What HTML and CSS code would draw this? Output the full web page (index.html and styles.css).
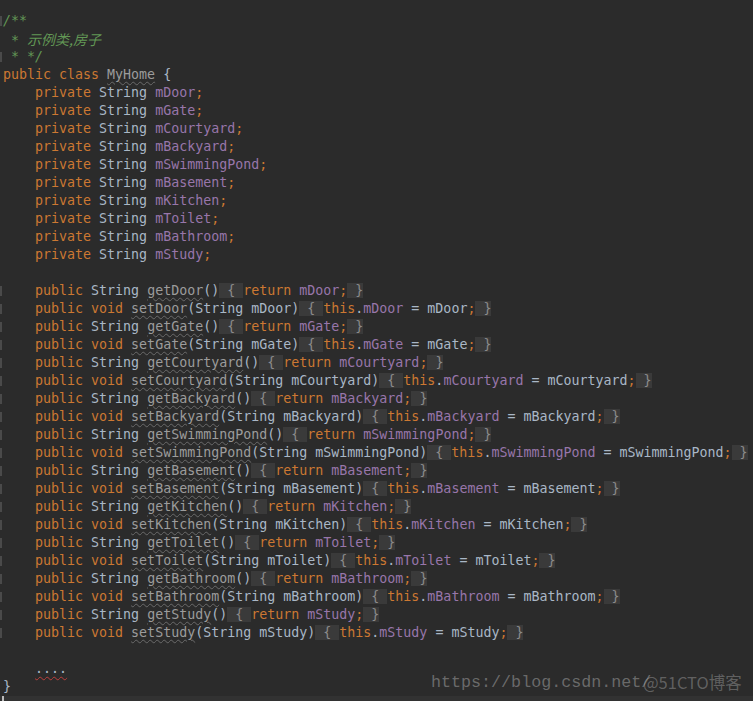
FILE: index.html
```html
<!DOCTYPE html>
<html lang="zh">
<head>
  <meta charset="UTF-8">
  <title>MyHome.java</title>
  <link rel="stylesheet" href="styles.css">
</head>
<body>
  <section class="editor">
    <div class="line mark"><span class="c">/**</span></div>
    <div class="line"><span class="c"> * <span class="cjk">示例类,房子</span></span></div>
    <div class="line mark"><span class="c"> * */</span></div>
    <div class="line"><span class="k">public class</span> <span class="u">MyHome</span> {</div>
    <div class="line">    <span class="k">private</span> String <span class="f">mDoor</span><span class="k">;</span></div>
    <div class="line">    <span class="k">private</span> String <span class="f">mGate</span><span class="k">;</span></div>
    <div class="line">    <span class="k">private</span> String <span class="f">mCourtyard</span><span class="k">;</span></div>
    <div class="line">    <span class="k">private</span> String <span class="f">mBackyard</span><span class="k">;</span></div>
    <div class="line">    <span class="k">private</span> String <span class="f">mSwimmingPond</span><span class="k">;</span></div>
    <div class="line">    <span class="k">private</span> String <span class="f">mBasement</span><span class="k">;</span></div>
    <div class="line">    <span class="k">private</span> String <span class="f">mKitchen</span><span class="k">;</span></div>
    <div class="line">    <span class="k">private</span> String <span class="f">mToilet</span><span class="k">;</span></div>
    <div class="line">    <span class="k">private</span> String <span class="f">mBathroom</span><span class="k">;</span></div>
    <div class="line">    <span class="k">private</span> String <span class="f">mStudy</span><span class="k">;</span></div>
    <div class="line"> </div>
    <div id="methods"></div>
    <div class="line"> </div>
    <div class="line">    <span class="e">....</span></div>
    <div class="line">}</div>
    <div class="line caret-line"><span class="caret"></span></div>

    <div class="watermark">https://blog.csdn.net/</div>
    <div class="watermark-51">@51CTO博客</div>
  </section>

  <script>
    const names = ['Door', 'Gate', 'Courtyard', 'Backyard', 'SwimmingPond',
                   'Basement', 'Kitchen', 'Toilet', 'Bathroom', 'Study'];
    const methods = document.getElementById('methods');
    let html = '';

    names.forEach(name => {
      const field = 'm' + name;
      html += '<div class="line mark">    <span class="k">public</span> String <span class="u">get' + name + '</span>()' +
        '<span class="fold"> { </span><span class="k">return</span> <span class="f">' + field + '</span><span class="k">;</span><span class="fold"> }</span></div>';
      html += '<div class="line mark">    <span class="k">public void</span> <span class="u">set' + name + '</span>(String ' + field + ')' +
        '<span class="fold"> { </span><span class="k">this</span>.<span class="f">' + field + '</span> = ' + field + '<span class="k">;</span><span class="fold"> }</span></div>';
    });

    methods.outerHTML = html;
  </script>
</body>
</html>
```

FILE: styles.css
```css
* {
  margin: 0;
  padding: 0;
  box-sizing: border-box;
}

body {
  background: #2b2b2b;
  height: 100vh;
  overflow: hidden;
}

.editor {
  position: relative;
  padding-top: 12px;
  font-family: "DejaVu Sans Mono", "Liberation Mono", monospace;
  font-size: 13.3px;
  color: #a9b7c6;
}

.line {
  position: relative;
  height: 18px;
  line-height: 18px;
  padding-left: 3px;
  white-space: pre;
}

.mark::before {
  content: "";
  position: absolute;
  left: 0;
  top: 4px;
  width: 2px;
  height: 10px;
  background: #4a4a4a;
}

.k {
  color: #cc7832;
}

.f {
  color: #9876aa;
}

.c {
  color: #629755;
  font-style: italic;
}

.cjk {
  font-family: "Noto Sans CJK SC", sans-serif;
  font-size: 14px;
}

.u {
  color: #9c9c9c;
  text-decoration: underline wavy #6a6a6a;
  text-decoration-thickness: 1px;
  text-underline-offset: 2px;
}

.e {
  text-decoration: underline wavy #bc3f3c;
  text-decoration-thickness: 1px;
  text-underline-offset: 3px;
}

.fold {
  background: #3a3a3a;
  color: #8b8b8b;
}

.caret-line {
  background: #323232;
}

.caret {
  position: absolute;
  left: 2px;
  top: 0;
  width: 2px;
  height: 18px;
  background: #bbbbbb;
}

.watermark {
  position: absolute;
  left: 431px;
  top: 673px;
  font-family: "Liberation Mono", monospace;
  font-size: 16.7px;
  color: rgba(160, 160, 160, 0.55);
}

.watermark-51 {
  position: absolute;
  left: 643px;
  top: 670px;
  font-family: "Noto Sans CJK SC", sans-serif;
  font-size: 16.5px;
  color: rgba(200, 200, 200, 0.35);
}
```
